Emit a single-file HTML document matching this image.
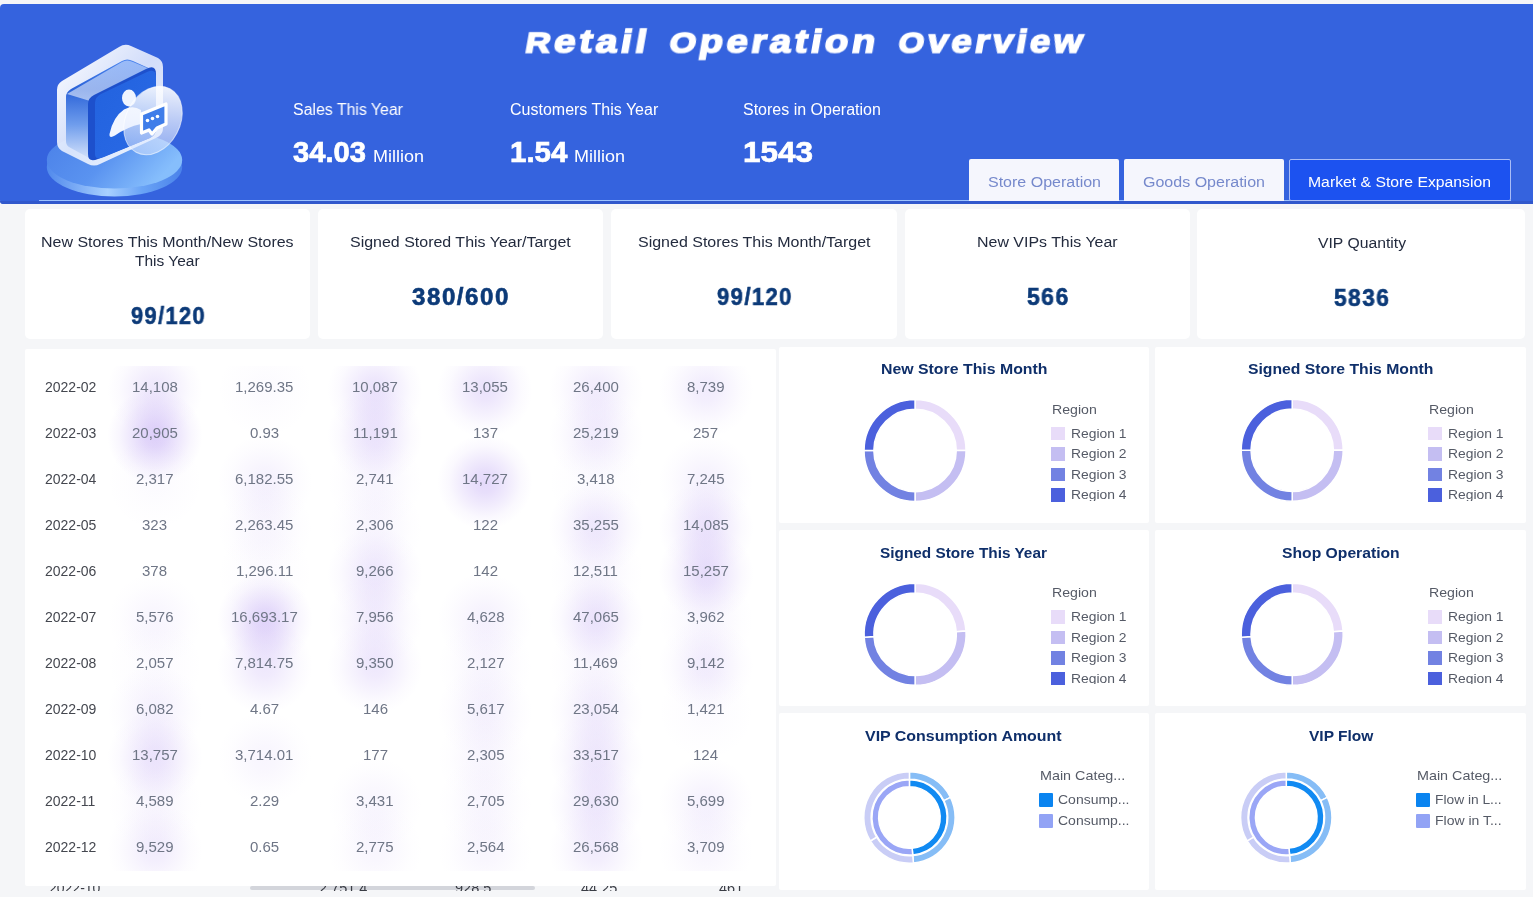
<!DOCTYPE html><html><head><meta charset="utf-8"><style>
*{margin:0;padding:0;box-sizing:border-box}
html,body{width:1533px;height:897px;overflow:hidden;background:#f5f6f8;font-family:"Liberation Sans",sans-serif}
.t{position:absolute;white-space:pre;line-height:1;transform-origin:0 0;will-change:transform}
.a{position:absolute}
.card{position:absolute;background:#fff;border-radius:4px}
</style></head><body><div class="a" style="left:0;top:4px;width:1533px;height:200px;background:#3563de;border-radius:4px 0 0 4px"></div><div class="a" style="left:0;top:201px;width:1533px;height:3px;background:#3158cc;border-radius:0 0 0 3px"></div><div class="a" style="left:39px;top:200px;width:1472px;height:1px;background:#9cc2ff"></div><div class="t" style="left:524px;top:24.67px;font-size:33px;color:#fff;font-weight:bold;letter-spacing:3px;transform-origin:0 27.93px;transform:skewX(-10deg) scaleX(1.1772);-webkit-text-stroke:1.6px #fff"><span style="font-size:29.5px">R</span>etail</div><div class="t" style="left:668px;top:24.67px;font-size:33px;color:#fff;font-weight:bold;letter-spacing:3px;transform-origin:0 27.93px;transform:skewX(-10deg) scaleX(1.1603);-webkit-text-stroke:1.6px #fff"><span style="font-size:29.5px">O</span>peration</div><div class="t" style="left:897px;top:24.67px;font-size:33px;color:#fff;font-weight:bold;letter-spacing:3px;transform-origin:0 27.93px;transform:skewX(-10deg) scaleX(1.1128);-webkit-text-stroke:1.6px #fff"><span style="font-size:29.5px">O</span>verview</div><div class="t" style="left:293.00px;top:101.76px;font-size:16px;color:#fff;font-weight:normal;font-style:normal;transform:scaleX(0.9919);">Sales This Year</div><div class="t" style="left:293.00px;top:137.95px;font-size:29px;color:#fff;font-weight:bold;font-style:normal;transform:scaleX(1.0059);-webkit-text-stroke:0.7px #fff;">34.03</div><div class="t" style="left:372.50px;top:148.11px;font-size:17px;color:#fff;font-weight:normal;font-style:normal;transform:scaleX(1.0585);">Million</div><div class="t" style="left:509.60px;top:101.76px;font-size:16px;color:#fff;font-weight:normal;font-style:normal;">Customers This Year</div><div class="t" style="left:509.60px;top:137.95px;font-size:29px;color:#fff;font-weight:bold;font-style:normal;transform:scaleX(1.0169);-webkit-text-stroke:0.7px #fff;">1.54</div><div class="t" style="left:573.50px;top:148.11px;font-size:17px;color:#fff;font-weight:normal;font-style:normal;transform:scaleX(1.0585);">Million</div><div class="t" style="left:743.00px;top:101.76px;font-size:16px;color:#fff;font-weight:normal;font-style:normal;">Stores in Operation</div><div class="t" style="left:743.00px;top:137.95px;font-size:29px;color:#fff;font-weight:bold;font-style:normal;transform:scaleX(1.0850);-webkit-text-stroke:0.7px #fff;">1543</div><div class="a" style="left:969px;top:159px;width:150px;height:42px;background:#f5f6fd;border-radius:2px 2px 0 0"></div><div class="a" style="left:1124px;top:159px;width:160px;height:42px;background:#f5f6fd;border-radius:2px 2px 0 0"></div><div class="a" style="left:1289px;top:159px;width:222px;height:42px;background:#1c52f0;border:1px solid #a9bdf7;border-radius:2px"></div><div class="t" style="left:987.50px;top:173.88px;font-size:15.5px;color:#7689cc;font-weight:normal;font-style:normal;transform:scaleX(1.0327);">Store Operation</div><div class="t" style="left:1143.00px;top:173.88px;font-size:15.5px;color:#7689cc;font-weight:normal;font-style:normal;transform:scaleX(1.0335);">Goods Operation</div><div class="t" style="left:1308.00px;top:173.88px;font-size:15.5px;color:#fff;font-weight:normal;font-style:normal;transform:scaleX(1.0163);">Market &amp; Store Expansion</div><svg class="a" style="left:0;top:0" width="220" height="205" viewBox="0 0 220 205">
<defs>
<linearGradient id="dtop" x1="0" y1="0" x2="1" y2="0.4"><stop offset="0" stop-color="#4a80e8"/><stop offset="0.55" stop-color="#5a93f0"/><stop offset="1" stop-color="#86befc"/></linearGradient>
<linearGradient id="drim" x1="0" y1="0" x2="1" y2="0"><stop offset="0" stop-color="#5089ec"/><stop offset="0.45" stop-color="#a8d0ff"/><stop offset="0.7" stop-color="#6aa4f6"/><stop offset="1" stop-color="#4a82ea"/></linearGradient>
<linearGradient id="glass" x1="0" y1="0" x2="1" y2="1"><stop offset="0" stop-color="#ffffff" stop-opacity="1"/><stop offset="0.5" stop-color="#eef3ff" stop-opacity="0.85"/><stop offset="1" stop-color="#ffffff" stop-opacity="0.9"/></linearGradient>
<linearGradient id="cav" x1="0" y1="0" x2="0" y2="1"><stop offset="0" stop-color="#4a84ee"/><stop offset="0.3" stop-color="#2a62d8"/><stop offset="0.65" stop-color="#6e9cec"/><stop offset="1" stop-color="#d4e2fb"/></linearGradient>
<linearGradient id="topf" x1="0" y1="1" x2="1" y2="0"><stop offset="0" stop-color="#ffffff" stop-opacity="0.55"/><stop offset="1" stop-color="#c9dcff" stop-opacity="0.6"/></linearGradient>
<linearGradient id="face" x1="0" y1="0" x2="1" y2="1"><stop offset="0" stop-color="#2262de"/><stop offset="1" stop-color="#2a6ae6"/></linearGradient>
<linearGradient id="circ" x1="0.2" y1="0" x2="0.5" y2="1"><stop offset="0" stop-color="#ffffff" stop-opacity="0.95"/><stop offset="0.55" stop-color="#eef3ff" stop-opacity="0.7"/><stop offset="1" stop-color="#d6e4ff" stop-opacity="0.55"/></linearGradient>
</defs>
<ellipse cx="114.5" cy="167" rx="67.7" ry="29.5" fill="url(#drim)"/>
<ellipse cx="114.5" cy="160" rx="67.7" ry="28.5" fill="url(#dtop)"/>
<path d="M57,90 Q57,84 62,81 L119,47 Q125,43 131,46 L158,58 Q163,61 163,67 L163,128 Q163,134 158,137 L100,164 Q94,167 88,164 L62,151 Q57,148 57,142 Z" fill="url(#glass)"/>
<path d="M66,97 Q66,92 71,89 L122,61 Q127,58 133,61 L155,71 L155,132 L97,158 Q93,160 89,158 L69,147 Q66,145 66,141 Z" fill="url(#cav)"/>
<path d="M67,94 L122,62 Q127,59 133,62 L152,70 L90,101 Z" fill="url(#topf)"/>
<path d="M88,104 Q88,98 94,95 L146,69 Q156,64 156,74 L156,129 Q156,135 150,138 L98,159 Q88,163 88,154 Z" fill="#1d50cc"/>
<path d="M95,103 Q95,97 101,94 L147,72 Q156,68 156,77 L156,129 Q156,135 150,138 L104,157 Q95,161 95,154 Z" fill="url(#face)"/>
<ellipse cx="129" cy="98" rx="7" ry="8.5" fill="#eef4ff"/>
<path d="M109.5,134 Q113,117 124,109.5 Q133,105 141,110 L141,124 Q127,127 115,135.5 Q109,139 109.5,134 Z" fill="#f2f6ff"/>
<ellipse cx="153" cy="120.5" rx="27" ry="36" transform="rotate(28 153 120.5)" fill="url(#circ)" stroke="#ffffff" stroke-opacity="0.6" stroke-width="1"/>
<path d="M141.5,114 L166,104 L166,124 L157,128 L152,134 L149,130 L141.5,133 Z" fill="#3f7de9" stroke="#ffffff" stroke-width="3.2" stroke-linejoin="round"/>
<circle cx="147.5" cy="120.5" r="1.8" fill="#ffffff"/><circle cx="152.5" cy="118.5" r="1.8" fill="#ffffff"/><circle cx="157.5" cy="116.5" r="1.8" fill="#ffffff"/>
</svg><div class="card" style="left:25px;top:209px;width:285px;height:130px;border-radius:5px"></div><div class="card" style="left:318px;top:209px;width:285.4px;height:130px;border-radius:5px"></div><div class="card" style="left:611px;top:209px;width:286.4px;height:130px;border-radius:5px"></div><div class="card" style="left:904.7px;top:209px;width:285.3px;height:130px;border-radius:5px"></div><div class="card" style="left:1197.4px;top:209px;width:328px;height:130px;border-radius:5px"></div><div class="t" style="left:41.30px;top:234.28px;font-size:15.5px;color:#232b3e;font-weight:normal;font-style:normal;transform:scaleX(1.0301);">New Stores This Month/New Stores</div><div class="t" style="left:135.29px;top:253.18px;font-size:15.5px;color:#232b3e;font-weight:normal;font-style:normal;">This Year</div><div class="t" style="left:130.70px;top:304.91px;font-size:23.5px;color:#0c3a78;font-weight:bold;font-style:normal;transform:scaleX(0.9273);letter-spacing:1.5px;-webkit-text-stroke:0.6px #0c3a78;">99/120</div><div class="t" style="left:350.20px;top:234.38px;font-size:15.5px;color:#232b3e;font-weight:normal;font-style:normal;transform:scaleX(1.0304);">Signed Stored This Year/Target</div><div class="t" style="left:412.42px;top:286.41px;font-size:23.5px;color:#0c3a78;font-weight:bold;font-style:normal;transform:scaleX(1.0257);letter-spacing:1.5px;-webkit-text-stroke:0.6px #0c3a78;">380/600</div><div class="t" style="left:637.75px;top:234.38px;font-size:15.5px;color:#232b3e;font-weight:normal;font-style:normal;transform:scaleX(1.0313);">Signed Stores This Month/Target</div><div class="t" style="left:717.30px;top:286.11px;font-size:23.5px;color:#0c3a78;font-weight:bold;font-style:normal;transform:scaleX(0.9372);letter-spacing:1.5px;-webkit-text-stroke:0.6px #0c3a78;">99/120</div><div class="t" style="left:977.10px;top:234.38px;font-size:15.5px;color:#232b3e;font-weight:normal;font-style:normal;transform:scaleX(1.0285);">New VIPs This Year</div><div class="t" style="left:1026.73px;top:286.11px;font-size:23.5px;color:#0c3a78;font-weight:bold;font-style:normal;transform:scaleX(0.9746);letter-spacing:1.5px;-webkit-text-stroke:0.6px #0c3a78;">566</div><div class="t" style="left:1317.50px;top:234.58px;font-size:15.5px;color:#232b3e;font-weight:normal;font-style:normal;transform:scaleX(1.0146);">VIP Quantity</div><div class="t" style="left:1334.27px;top:286.91px;font-size:23.5px;color:#0c3a78;font-weight:bold;font-style:normal;transform:scaleX(0.9660);letter-spacing:1.5px;-webkit-text-stroke:0.6px #0c3a78;">5836</div><div class="card" style="left:25px;top:349px;width:751px;height:537px;border-radius:2px"></div><div class="card" style="left:779px;top:347px;width:370px;height:176px;border-radius:2px"></div><div class="card" style="left:779px;top:530px;width:370px;height:176px;border-radius:2px"></div><div class="card" style="left:779px;top:713px;width:370px;height:177px;border-radius:2px"></div><div class="card" style="left:1155px;top:347px;width:371px;height:176px;border-radius:2px"></div><div class="card" style="left:1155px;top:530px;width:371px;height:176px;border-radius:2px"></div><div class="card" style="left:1155px;top:713px;width:371px;height:177px;border-radius:2px"></div><div class="a" style="left:25px;top:886px;width:751px;height:5px;overflow:hidden"><div class="a" style="left:225px;top:0px;width:285px;height:4px;background:#d3d5db;border-radius:2px"></div><div class="t" style="left:24.00px;top:-4.65px;font-size:14px;color:#3a3d45;font-weight:normal;font-style:normal;">2022-10</div><div class="t" style="left:294.31px;top:-5.07px;font-size:14.5px;color:#3a3d45;font-weight:normal;font-style:normal;">2,751.4</div><div class="t" style="left:429.86px;top:-5.07px;font-size:14.5px;color:#3a3d45;font-weight:normal;font-style:normal;">928.5</div><div class="t" style="left:555.86px;top:-5.07px;font-size:14.5px;color:#3a3d45;font-weight:normal;font-style:normal;">44.25</div><div class="t" style="left:693.90px;top:-5.07px;font-size:14.5px;color:#3a3d45;font-weight:normal;font-style:normal;">461</div></div><div class="a" style="left:25px;top:366px;width:751px;height:505px;overflow:hidden"><div class="a" style="left:79.6px;top:-26px;width:100px;height:100px;background:radial-gradient(closest-side,rgba(155,115,238,0.170) 0%,rgba(155,115,238,0.145) 22%,rgba(155,115,238,0.085) 48%,rgba(155,115,238,0.031) 72%,rgba(155,115,238,0) 95%)"></div><div class="a" style="left:79.6px;top:20px;width:100px;height:100px;background:radial-gradient(closest-side,rgba(155,115,238,0.340) 0%,rgba(155,115,238,0.289) 22%,rgba(155,115,238,0.170) 48%,rgba(155,115,238,0.061) 72%,rgba(155,115,238,0) 95%)"></div><div class="a" style="left:79.6px;top:66px;width:100px;height:100px;background:radial-gradient(closest-side,rgba(155,115,238,0.034) 0%,rgba(155,115,238,0.029) 22%,rgba(155,115,238,0.017) 48%,rgba(155,115,238,0.006) 72%,rgba(155,115,238,0) 95%)"></div><div class="a" style="left:79.6px;top:204px;width:100px;height:100px;background:radial-gradient(closest-side,rgba(155,115,238,0.068) 0%,rgba(155,115,238,0.058) 22%,rgba(155,115,238,0.034) 48%,rgba(155,115,238,0.012) 72%,rgba(155,115,238,0) 95%)"></div><div class="a" style="left:79.6px;top:250px;width:100px;height:100px;background:radial-gradient(closest-side,rgba(155,115,238,0.034) 0%,rgba(155,115,238,0.029) 22%,rgba(155,115,238,0.017) 48%,rgba(155,115,238,0.006) 72%,rgba(155,115,238,0) 95%)"></div><div class="a" style="left:79.6px;top:296px;width:100px;height:100px;background:radial-gradient(closest-side,rgba(155,115,238,0.102) 0%,rgba(155,115,238,0.087) 22%,rgba(155,115,238,0.051) 48%,rgba(155,115,238,0.018) 72%,rgba(155,115,238,0) 95%)"></div><div class="a" style="left:79.6px;top:342px;width:100px;height:100px;background:radial-gradient(closest-side,rgba(155,115,238,0.204) 0%,rgba(155,115,238,0.173) 22%,rgba(155,115,238,0.102) 48%,rgba(155,115,238,0.037) 72%,rgba(155,115,238,0) 95%)"></div><div class="a" style="left:79.6px;top:388px;width:100px;height:100px;background:radial-gradient(closest-side,rgba(155,115,238,0.068) 0%,rgba(155,115,238,0.058) 22%,rgba(155,115,238,0.034) 48%,rgba(155,115,238,0.012) 72%,rgba(155,115,238,0) 95%)"></div><div class="a" style="left:79.6px;top:434px;width:100px;height:100px;background:radial-gradient(closest-side,rgba(155,115,238,0.136) 0%,rgba(155,115,238,0.116) 22%,rgba(155,115,238,0.068) 48%,rgba(155,115,238,0.024) 72%,rgba(155,115,238,0) 95%)"></div><div class="a" style="left:189.6px;top:-26px;width:100px;height:100px;background:radial-gradient(closest-side,rgba(155,115,238,0.034) 0%,rgba(155,115,238,0.029) 22%,rgba(155,115,238,0.017) 48%,rgba(155,115,238,0.006) 72%,rgba(155,115,238,0) 95%)"></div><div class="a" style="left:189.6px;top:66px;width:100px;height:100px;background:radial-gradient(closest-side,rgba(155,115,238,0.102) 0%,rgba(155,115,238,0.087) 22%,rgba(155,115,238,0.051) 48%,rgba(155,115,238,0.018) 72%,rgba(155,115,238,0) 95%)"></div><div class="a" style="left:189.6px;top:112px;width:100px;height:100px;background:radial-gradient(closest-side,rgba(155,115,238,0.068) 0%,rgba(155,115,238,0.058) 22%,rgba(155,115,238,0.034) 48%,rgba(155,115,238,0.012) 72%,rgba(155,115,238,0) 95%)"></div><div class="a" style="left:189.6px;top:158px;width:100px;height:100px;background:radial-gradient(closest-side,rgba(155,115,238,0.034) 0%,rgba(155,115,238,0.029) 22%,rgba(155,115,238,0.017) 48%,rgba(155,115,238,0.006) 72%,rgba(155,115,238,0) 95%)"></div><div class="a" style="left:189.6px;top:204px;width:100px;height:100px;background:radial-gradient(closest-side,rgba(155,115,238,0.306) 0%,rgba(155,115,238,0.260) 22%,rgba(155,115,238,0.153) 48%,rgba(155,115,238,0.055) 72%,rgba(155,115,238,0) 95%)"></div><div class="a" style="left:189.6px;top:250px;width:100px;height:100px;background:radial-gradient(closest-side,rgba(155,115,238,0.170) 0%,rgba(155,115,238,0.145) 22%,rgba(155,115,238,0.085) 48%,rgba(155,115,238,0.031) 72%,rgba(155,115,238,0) 95%)"></div><div class="a" style="left:189.6px;top:342px;width:100px;height:100px;background:radial-gradient(closest-side,rgba(155,115,238,0.068) 0%,rgba(155,115,238,0.058) 22%,rgba(155,115,238,0.034) 48%,rgba(155,115,238,0.012) 72%,rgba(155,115,238,0) 95%)"></div><div class="a" style="left:300.1px;top:-26px;width:100px;height:100px;background:radial-gradient(closest-side,rgba(155,115,238,0.204) 0%,rgba(155,115,238,0.173) 22%,rgba(155,115,238,0.102) 48%,rgba(155,115,238,0.037) 72%,rgba(155,115,238,0) 95%)"></div><div class="a" style="left:300.1px;top:20px;width:100px;height:100px;background:radial-gradient(closest-side,rgba(155,115,238,0.204) 0%,rgba(155,115,238,0.173) 22%,rgba(155,115,238,0.102) 48%,rgba(155,115,238,0.037) 72%,rgba(155,115,238,0) 95%)"></div><div class="a" style="left:300.1px;top:66px;width:100px;height:100px;background:radial-gradient(closest-side,rgba(155,115,238,0.068) 0%,rgba(155,115,238,0.058) 22%,rgba(155,115,238,0.034) 48%,rgba(155,115,238,0.012) 72%,rgba(155,115,238,0) 95%)"></div><div class="a" style="left:300.1px;top:112px;width:100px;height:100px;background:radial-gradient(closest-side,rgba(155,115,238,0.068) 0%,rgba(155,115,238,0.058) 22%,rgba(155,115,238,0.034) 48%,rgba(155,115,238,0.012) 72%,rgba(155,115,238,0) 95%)"></div><div class="a" style="left:300.1px;top:158px;width:100px;height:100px;background:radial-gradient(closest-side,rgba(155,115,238,0.170) 0%,rgba(155,115,238,0.145) 22%,rgba(155,115,238,0.085) 48%,rgba(155,115,238,0.031) 72%,rgba(155,115,238,0) 95%)"></div><div class="a" style="left:300.1px;top:204px;width:100px;height:100px;background:radial-gradient(closest-side,rgba(155,115,238,0.136) 0%,rgba(155,115,238,0.116) 22%,rgba(155,115,238,0.068) 48%,rgba(155,115,238,0.024) 72%,rgba(155,115,238,0) 95%)"></div><div class="a" style="left:300.1px;top:250px;width:100px;height:100px;background:radial-gradient(closest-side,rgba(155,115,238,0.170) 0%,rgba(155,115,238,0.145) 22%,rgba(155,115,238,0.085) 48%,rgba(155,115,238,0.031) 72%,rgba(155,115,238,0) 95%)"></div><div class="a" style="left:300.1px;top:388px;width:100px;height:100px;background:radial-gradient(closest-side,rgba(155,115,238,0.068) 0%,rgba(155,115,238,0.058) 22%,rgba(155,115,238,0.034) 48%,rgba(155,115,238,0.012) 72%,rgba(155,115,238,0) 95%)"></div><div class="a" style="left:300.1px;top:434px;width:100px;height:100px;background:radial-gradient(closest-side,rgba(155,115,238,0.068) 0%,rgba(155,115,238,0.058) 22%,rgba(155,115,238,0.034) 48%,rgba(155,115,238,0.012) 72%,rgba(155,115,238,0) 95%)"></div><div class="a" style="left:410.4px;top:-26px;width:100px;height:100px;background:radial-gradient(closest-side,rgba(155,115,238,0.204) 0%,rgba(155,115,238,0.173) 22%,rgba(155,115,238,0.102) 48%,rgba(155,115,238,0.037) 72%,rgba(155,115,238,0) 95%)"></div><div class="a" style="left:410.4px;top:66px;width:100px;height:100px;background:radial-gradient(closest-side,rgba(155,115,238,0.272) 0%,rgba(155,115,238,0.231) 22%,rgba(155,115,238,0.136) 48%,rgba(155,115,238,0.049) 72%,rgba(155,115,238,0) 95%)"></div><div class="a" style="left:410.4px;top:204px;width:100px;height:100px;background:radial-gradient(closest-side,rgba(155,115,238,0.102) 0%,rgba(155,115,238,0.087) 22%,rgba(155,115,238,0.051) 48%,rgba(155,115,238,0.018) 72%,rgba(155,115,238,0) 95%)"></div><div class="a" style="left:410.4px;top:250px;width:100px;height:100px;background:radial-gradient(closest-side,rgba(155,115,238,0.068) 0%,rgba(155,115,238,0.058) 22%,rgba(155,115,238,0.034) 48%,rgba(155,115,238,0.012) 72%,rgba(155,115,238,0) 95%)"></div><div class="a" style="left:410.4px;top:296px;width:100px;height:100px;background:radial-gradient(closest-side,rgba(155,115,238,0.102) 0%,rgba(155,115,238,0.087) 22%,rgba(155,115,238,0.051) 48%,rgba(155,115,238,0.018) 72%,rgba(155,115,238,0) 95%)"></div><div class="a" style="left:410.4px;top:342px;width:100px;height:100px;background:radial-gradient(closest-side,rgba(155,115,238,0.068) 0%,rgba(155,115,238,0.058) 22%,rgba(155,115,238,0.034) 48%,rgba(155,115,238,0.012) 72%,rgba(155,115,238,0) 95%)"></div><div class="a" style="left:410.4px;top:388px;width:100px;height:100px;background:radial-gradient(closest-side,rgba(155,115,238,0.068) 0%,rgba(155,115,238,0.058) 22%,rgba(155,115,238,0.034) 48%,rgba(155,115,238,0.012) 72%,rgba(155,115,238,0) 95%)"></div><div class="a" style="left:410.4px;top:434px;width:100px;height:100px;background:radial-gradient(closest-side,rgba(155,115,238,0.068) 0%,rgba(155,115,238,0.058) 22%,rgba(155,115,238,0.034) 48%,rgba(155,115,238,0.012) 72%,rgba(155,115,238,0) 95%)"></div><div class="a" style="left:520.6px;top:-26px;width:100px;height:100px;background:radial-gradient(closest-side,rgba(155,115,238,0.136) 0%,rgba(155,115,238,0.116) 22%,rgba(155,115,238,0.068) 48%,rgba(155,115,238,0.024) 72%,rgba(155,115,238,0) 95%)"></div><div class="a" style="left:520.6px;top:20px;width:100px;height:100px;background:radial-gradient(closest-side,rgba(155,115,238,0.136) 0%,rgba(155,115,238,0.116) 22%,rgba(155,115,238,0.068) 48%,rgba(155,115,238,0.024) 72%,rgba(155,115,238,0) 95%)"></div><div class="a" style="left:520.6px;top:66px;width:100px;height:100px;background:radial-gradient(closest-side,rgba(155,115,238,0.034) 0%,rgba(155,115,238,0.029) 22%,rgba(155,115,238,0.017) 48%,rgba(155,115,238,0.006) 72%,rgba(155,115,238,0) 95%)"></div><div class="a" style="left:520.6px;top:112px;width:100px;height:100px;background:radial-gradient(closest-side,rgba(155,115,238,0.170) 0%,rgba(155,115,238,0.145) 22%,rgba(155,115,238,0.085) 48%,rgba(155,115,238,0.031) 72%,rgba(155,115,238,0) 95%)"></div><div class="a" style="left:520.6px;top:158px;width:100px;height:100px;background:radial-gradient(closest-side,rgba(155,115,238,0.068) 0%,rgba(155,115,238,0.058) 22%,rgba(155,115,238,0.034) 48%,rgba(155,115,238,0.012) 72%,rgba(155,115,238,0) 95%)"></div><div class="a" style="left:520.6px;top:204px;width:100px;height:100px;background:radial-gradient(closest-side,rgba(155,115,238,0.204) 0%,rgba(155,115,238,0.173) 22%,rgba(155,115,238,0.102) 48%,rgba(155,115,238,0.037) 72%,rgba(155,115,238,0) 95%)"></div><div class="a" style="left:520.6px;top:250px;width:100px;height:100px;background:radial-gradient(closest-side,rgba(155,115,238,0.068) 0%,rgba(155,115,238,0.058) 22%,rgba(155,115,238,0.034) 48%,rgba(155,115,238,0.012) 72%,rgba(155,115,238,0) 95%)"></div><div class="a" style="left:520.6px;top:296px;width:100px;height:100px;background:radial-gradient(closest-side,rgba(155,115,238,0.136) 0%,rgba(155,115,238,0.116) 22%,rgba(155,115,238,0.068) 48%,rgba(155,115,238,0.024) 72%,rgba(155,115,238,0) 95%)"></div><div class="a" style="left:520.6px;top:342px;width:100px;height:100px;background:radial-gradient(closest-side,rgba(155,115,238,0.170) 0%,rgba(155,115,238,0.145) 22%,rgba(155,115,238,0.085) 48%,rgba(155,115,238,0.031) 72%,rgba(155,115,238,0) 95%)"></div><div class="a" style="left:520.6px;top:388px;width:100px;height:100px;background:radial-gradient(closest-side,rgba(155,115,238,0.170) 0%,rgba(155,115,238,0.145) 22%,rgba(155,115,238,0.085) 48%,rgba(155,115,238,0.031) 72%,rgba(155,115,238,0) 95%)"></div><div class="a" style="left:520.6px;top:434px;width:100px;height:100px;background:radial-gradient(closest-side,rgba(155,115,238,0.136) 0%,rgba(155,115,238,0.116) 22%,rgba(155,115,238,0.068) 48%,rgba(155,115,238,0.024) 72%,rgba(155,115,238,0) 95%)"></div><div class="a" style="left:630.6px;top:-26px;width:100px;height:100px;background:radial-gradient(closest-side,rgba(155,115,238,0.136) 0%,rgba(155,115,238,0.116) 22%,rgba(155,115,238,0.068) 48%,rgba(155,115,238,0.024) 72%,rgba(155,115,238,0) 95%)"></div><div class="a" style="left:630.6px;top:66px;width:100px;height:100px;background:radial-gradient(closest-side,rgba(155,115,238,0.102) 0%,rgba(155,115,238,0.087) 22%,rgba(155,115,238,0.051) 48%,rgba(155,115,238,0.018) 72%,rgba(155,115,238,0) 95%)"></div><div class="a" style="left:630.6px;top:112px;width:100px;height:100px;background:radial-gradient(closest-side,rgba(155,115,238,0.204) 0%,rgba(155,115,238,0.173) 22%,rgba(155,115,238,0.102) 48%,rgba(155,115,238,0.037) 72%,rgba(155,115,238,0) 95%)"></div><div class="a" style="left:630.6px;top:158px;width:100px;height:100px;background:radial-gradient(closest-side,rgba(155,115,238,0.238) 0%,rgba(155,115,238,0.202) 22%,rgba(155,115,238,0.119) 48%,rgba(155,115,238,0.043) 72%,rgba(155,115,238,0) 95%)"></div><div class="a" style="left:630.6px;top:204px;width:100px;height:100px;background:radial-gradient(closest-side,rgba(155,115,238,0.068) 0%,rgba(155,115,238,0.058) 22%,rgba(155,115,238,0.034) 48%,rgba(155,115,238,0.012) 72%,rgba(155,115,238,0) 95%)"></div><div class="a" style="left:630.6px;top:250px;width:100px;height:100px;background:radial-gradient(closest-side,rgba(155,115,238,0.136) 0%,rgba(155,115,238,0.116) 22%,rgba(155,115,238,0.068) 48%,rgba(155,115,238,0.024) 72%,rgba(155,115,238,0) 95%)"></div><div class="a" style="left:630.6px;top:296px;width:100px;height:100px;background:radial-gradient(closest-side,rgba(155,115,238,0.034) 0%,rgba(155,115,238,0.029) 22%,rgba(155,115,238,0.017) 48%,rgba(155,115,238,0.006) 72%,rgba(155,115,238,0) 95%)"></div><div class="a" style="left:630.6px;top:388px;width:100px;height:100px;background:radial-gradient(closest-side,rgba(155,115,238,0.102) 0%,rgba(155,115,238,0.087) 22%,rgba(155,115,238,0.051) 48%,rgba(155,115,238,0.018) 72%,rgba(155,115,238,0) 95%)"></div><div class="a" style="left:630.6px;top:434px;width:100px;height:100px;background:radial-gradient(closest-side,rgba(155,115,238,0.068) 0%,rgba(155,115,238,0.058) 22%,rgba(155,115,238,0.034) 48%,rgba(155,115,238,0.012) 72%,rgba(155,115,238,0) 95%)"></div></div><div class="t" style="left:45.10px;top:379.55px;font-size:14px;color:#44474f;font-weight:normal;font-style:normal;">2022-02</div><div class="t" style="left:131.66px;top:378.70px;font-size:15px;color:#6f7686;font-weight:normal;font-style:normal;">14,108</div><div class="t" style="left:235.41px;top:378.70px;font-size:15px;color:#6f7686;font-weight:normal;font-style:normal;">1,269.35</div><div class="t" style="left:352.16px;top:378.70px;font-size:15px;color:#6f7686;font-weight:normal;font-style:normal;">10,087</div><div class="t" style="left:462.46px;top:378.70px;font-size:15px;color:#6f7686;font-weight:normal;font-style:normal;">13,055</div><div class="t" style="left:572.66px;top:378.70px;font-size:15px;color:#6f7686;font-weight:normal;font-style:normal;">26,400</div><div class="t" style="left:686.83px;top:378.70px;font-size:15px;color:#6f7686;font-weight:normal;font-style:normal;">8,739</div><div class="t" style="left:45.10px;top:425.55px;font-size:14px;color:#44474f;font-weight:normal;font-style:normal;">2022-03</div><div class="t" style="left:131.66px;top:424.70px;font-size:15px;color:#6f7686;font-weight:normal;font-style:normal;">20,905</div><div class="t" style="left:250.00px;top:424.70px;font-size:15px;color:#6f7686;font-weight:normal;font-style:normal;">0.93</div><div class="t" style="left:352.72px;top:424.70px;font-size:15px;color:#6f7686;font-weight:normal;font-style:normal;">11,191</div><div class="t" style="left:472.89px;top:424.70px;font-size:15px;color:#6f7686;font-weight:normal;font-style:normal;">137</div><div class="t" style="left:572.66px;top:424.70px;font-size:15px;color:#6f7686;font-weight:normal;font-style:normal;">25,219</div><div class="t" style="left:693.09px;top:424.70px;font-size:15px;color:#6f7686;font-weight:normal;font-style:normal;">257</div><div class="t" style="left:45.10px;top:471.55px;font-size:14px;color:#44474f;font-weight:normal;font-style:normal;">2022-04</div><div class="t" style="left:135.83px;top:470.70px;font-size:15px;color:#6f7686;font-weight:normal;font-style:normal;">2,317</div><div class="t" style="left:235.41px;top:470.70px;font-size:15px;color:#6f7686;font-weight:normal;font-style:normal;">6,182.55</div><div class="t" style="left:356.33px;top:470.70px;font-size:15px;color:#6f7686;font-weight:normal;font-style:normal;">2,741</div><div class="t" style="left:462.46px;top:470.70px;font-size:15px;color:#6f7686;font-weight:normal;font-style:normal;">14,727</div><div class="t" style="left:576.83px;top:470.70px;font-size:15px;color:#6f7686;font-weight:normal;font-style:normal;">3,418</div><div class="t" style="left:686.83px;top:470.70px;font-size:15px;color:#6f7686;font-weight:normal;font-style:normal;">7,245</div><div class="t" style="left:45.10px;top:517.55px;font-size:14px;color:#44474f;font-weight:normal;font-style:normal;">2022-05</div><div class="t" style="left:142.09px;top:516.70px;font-size:15px;color:#6f7686;font-weight:normal;font-style:normal;">323</div><div class="t" style="left:235.41px;top:516.70px;font-size:15px;color:#6f7686;font-weight:normal;font-style:normal;">2,263.45</div><div class="t" style="left:356.33px;top:516.70px;font-size:15px;color:#6f7686;font-weight:normal;font-style:normal;">2,306</div><div class="t" style="left:472.89px;top:516.70px;font-size:15px;color:#6f7686;font-weight:normal;font-style:normal;">122</div><div class="t" style="left:572.66px;top:516.70px;font-size:15px;color:#6f7686;font-weight:normal;font-style:normal;">35,255</div><div class="t" style="left:682.66px;top:516.70px;font-size:15px;color:#6f7686;font-weight:normal;font-style:normal;">14,085</div><div class="t" style="left:45.10px;top:563.55px;font-size:14px;color:#44474f;font-weight:normal;font-style:normal;">2022-06</div><div class="t" style="left:142.09px;top:562.70px;font-size:15px;color:#6f7686;font-weight:normal;font-style:normal;">378</div><div class="t" style="left:235.96px;top:562.70px;font-size:15px;color:#6f7686;font-weight:normal;font-style:normal;">1,296.11</div><div class="t" style="left:356.33px;top:562.70px;font-size:15px;color:#6f7686;font-weight:normal;font-style:normal;">9,266</div><div class="t" style="left:472.89px;top:562.70px;font-size:15px;color:#6f7686;font-weight:normal;font-style:normal;">142</div><div class="t" style="left:573.22px;top:562.70px;font-size:15px;color:#6f7686;font-weight:normal;font-style:normal;">12,511</div><div class="t" style="left:682.66px;top:562.70px;font-size:15px;color:#6f7686;font-weight:normal;font-style:normal;">15,257</div><div class="t" style="left:45.10px;top:609.55px;font-size:14px;color:#44474f;font-weight:normal;font-style:normal;">2022-07</div><div class="t" style="left:135.83px;top:608.70px;font-size:15px;color:#6f7686;font-weight:normal;font-style:normal;">5,576</div><div class="t" style="left:231.23px;top:608.70px;font-size:15px;color:#6f7686;font-weight:normal;font-style:normal;">16,693.17</div><div class="t" style="left:356.33px;top:608.70px;font-size:15px;color:#6f7686;font-weight:normal;font-style:normal;">7,956</div><div class="t" style="left:466.63px;top:608.70px;font-size:15px;color:#6f7686;font-weight:normal;font-style:normal;">4,628</div><div class="t" style="left:572.66px;top:608.70px;font-size:15px;color:#6f7686;font-weight:normal;font-style:normal;">47,065</div><div class="t" style="left:686.83px;top:608.70px;font-size:15px;color:#6f7686;font-weight:normal;font-style:normal;">3,962</div><div class="t" style="left:45.10px;top:655.55px;font-size:14px;color:#44474f;font-weight:normal;font-style:normal;">2022-08</div><div class="t" style="left:135.83px;top:654.70px;font-size:15px;color:#6f7686;font-weight:normal;font-style:normal;">2,057</div><div class="t" style="left:235.41px;top:654.70px;font-size:15px;color:#6f7686;font-weight:normal;font-style:normal;">7,814.75</div><div class="t" style="left:356.33px;top:654.70px;font-size:15px;color:#6f7686;font-weight:normal;font-style:normal;">9,350</div><div class="t" style="left:466.63px;top:654.70px;font-size:15px;color:#6f7686;font-weight:normal;font-style:normal;">2,127</div><div class="t" style="left:573.22px;top:654.70px;font-size:15px;color:#6f7686;font-weight:normal;font-style:normal;">11,469</div><div class="t" style="left:686.83px;top:654.70px;font-size:15px;color:#6f7686;font-weight:normal;font-style:normal;">9,142</div><div class="t" style="left:45.10px;top:701.55px;font-size:14px;color:#44474f;font-weight:normal;font-style:normal;">2022-09</div><div class="t" style="left:135.83px;top:700.70px;font-size:15px;color:#6f7686;font-weight:normal;font-style:normal;">6,082</div><div class="t" style="left:250.00px;top:700.70px;font-size:15px;color:#6f7686;font-weight:normal;font-style:normal;">4.67</div><div class="t" style="left:362.59px;top:700.70px;font-size:15px;color:#6f7686;font-weight:normal;font-style:normal;">146</div><div class="t" style="left:466.63px;top:700.70px;font-size:15px;color:#6f7686;font-weight:normal;font-style:normal;">5,617</div><div class="t" style="left:572.66px;top:700.70px;font-size:15px;color:#6f7686;font-weight:normal;font-style:normal;">23,054</div><div class="t" style="left:686.83px;top:700.70px;font-size:15px;color:#6f7686;font-weight:normal;font-style:normal;">1,421</div><div class="t" style="left:45.10px;top:747.55px;font-size:14px;color:#44474f;font-weight:normal;font-style:normal;">2022-10</div><div class="t" style="left:131.66px;top:746.70px;font-size:15px;color:#6f7686;font-weight:normal;font-style:normal;">13,757</div><div class="t" style="left:235.41px;top:746.70px;font-size:15px;color:#6f7686;font-weight:normal;font-style:normal;">3,714.01</div><div class="t" style="left:362.59px;top:746.70px;font-size:15px;color:#6f7686;font-weight:normal;font-style:normal;">177</div><div class="t" style="left:466.63px;top:746.70px;font-size:15px;color:#6f7686;font-weight:normal;font-style:normal;">2,305</div><div class="t" style="left:572.66px;top:746.70px;font-size:15px;color:#6f7686;font-weight:normal;font-style:normal;">33,517</div><div class="t" style="left:693.09px;top:746.70px;font-size:15px;color:#6f7686;font-weight:normal;font-style:normal;">124</div><div class="t" style="left:45.10px;top:793.55px;font-size:14px;color:#44474f;font-weight:normal;font-style:normal;">2022-11</div><div class="t" style="left:135.83px;top:792.70px;font-size:15px;color:#6f7686;font-weight:normal;font-style:normal;">4,589</div><div class="t" style="left:250.00px;top:792.70px;font-size:15px;color:#6f7686;font-weight:normal;font-style:normal;">2.29</div><div class="t" style="left:356.33px;top:792.70px;font-size:15px;color:#6f7686;font-weight:normal;font-style:normal;">3,431</div><div class="t" style="left:466.63px;top:792.70px;font-size:15px;color:#6f7686;font-weight:normal;font-style:normal;">2,705</div><div class="t" style="left:572.66px;top:792.70px;font-size:15px;color:#6f7686;font-weight:normal;font-style:normal;">29,630</div><div class="t" style="left:686.83px;top:792.70px;font-size:15px;color:#6f7686;font-weight:normal;font-style:normal;">5,699</div><div class="t" style="left:45.10px;top:839.55px;font-size:14px;color:#44474f;font-weight:normal;font-style:normal;">2022-12</div><div class="t" style="left:135.83px;top:838.70px;font-size:15px;color:#6f7686;font-weight:normal;font-style:normal;">9,529</div><div class="t" style="left:250.00px;top:838.70px;font-size:15px;color:#6f7686;font-weight:normal;font-style:normal;">0.65</div><div class="t" style="left:356.33px;top:838.70px;font-size:15px;color:#6f7686;font-weight:normal;font-style:normal;">2,775</div><div class="t" style="left:466.63px;top:838.70px;font-size:15px;color:#6f7686;font-weight:normal;font-style:normal;">2,564</div><div class="t" style="left:572.66px;top:838.70px;font-size:15px;color:#6f7686;font-weight:normal;font-style:normal;">26,568</div><div class="t" style="left:686.83px;top:838.70px;font-size:15px;color:#6f7686;font-weight:normal;font-style:normal;">3,709</div><svg class="a" style="left:0;top:0" width="1533" height="897" viewBox="0 0 1533 897"><path d="M915.05,399.45 A51,51 0 0 1 966.05,450.45 L956.25,450.45 A41.2,41.2 0 0 0 915.05,409.25 Z" fill="#e8dcf9" stroke="#fff" stroke-width="1.5" stroke-linejoin="round"/><path d="M966.05,450.45 A51,51 0 0 1 915.05,501.45 L915.05,491.65 A41.2,41.2 0 0 0 956.25,450.45 Z" fill="#c4bef2" stroke="#fff" stroke-width="1.5" stroke-linejoin="round"/><path d="M915.05,501.45 A51,51 0 0 1 864.05,450.45 L873.85,450.45 A41.2,41.2 0 0 0 915.05,491.65 Z" fill="#7282e2" stroke="#fff" stroke-width="1.5" stroke-linejoin="round"/><path d="M864.05,450.45 A51,51 0 0 1 915.05,399.45 L915.05,409.25 A41.2,41.2 0 0 0 873.85,450.45 Z" fill="#4b60dd" stroke="#fff" stroke-width="1.5" stroke-linejoin="round"/><path d="M1292.20,399.30 A51,51 0 0 1 1343.20,450.30 L1333.40,450.30 A41.2,41.2 0 0 0 1292.20,409.10 Z" fill="#e8dcf9" stroke="#fff" stroke-width="1.5" stroke-linejoin="round"/><path d="M1343.20,450.30 A51,51 0 0 1 1292.20,501.30 L1292.20,491.50 A41.2,41.2 0 0 0 1333.40,450.30 Z" fill="#c4bef2" stroke="#fff" stroke-width="1.5" stroke-linejoin="round"/><path d="M1292.20,501.30 A51,51 0 0 1 1241.20,450.30 L1251.00,450.30 A41.2,41.2 0 0 0 1292.20,491.50 Z" fill="#7282e2" stroke="#fff" stroke-width="1.5" stroke-linejoin="round"/><path d="M1241.20,450.30 A51,51 0 0 1 1292.20,399.30 L1292.20,409.10 A41.2,41.2 0 0 0 1251.00,450.30 Z" fill="#4b60dd" stroke="#fff" stroke-width="1.5" stroke-linejoin="round"/><path d="M915.10,583.30 A51,51 0 0 1 965.99,631.01 L956.21,631.64 A41.2,41.2 0 0 0 915.10,593.10 Z" fill="#e8dcf9" stroke="#fff" stroke-width="1.5" stroke-linejoin="round"/><path d="M965.99,631.01 A51,51 0 0 1 915.10,685.30 L915.10,675.50 A41.2,41.2 0 0 0 956.21,631.64 Z" fill="#c4bef2" stroke="#fff" stroke-width="1.5" stroke-linejoin="round"/><path d="M915.10,685.30 A51,51 0 0 1 864.18,637.15 L873.96,636.60 A41.2,41.2 0 0 0 915.10,675.50 Z" fill="#7282e2" stroke="#fff" stroke-width="1.5" stroke-linejoin="round"/><path d="M864.18,637.15 A51,51 0 0 1 915.10,583.30 L915.10,593.10 A41.2,41.2 0 0 0 873.96,636.60 Z" fill="#4b60dd" stroke="#fff" stroke-width="1.5" stroke-linejoin="round"/><path d="M1292.20,583.30 A51,51 0 0 1 1343.09,631.01 L1333.31,631.64 A41.2,41.2 0 0 0 1292.20,593.10 Z" fill="#e8dcf9" stroke="#fff" stroke-width="1.5" stroke-linejoin="round"/><path d="M1343.09,631.01 A51,51 0 0 1 1292.20,685.30 L1292.20,675.50 A41.2,41.2 0 0 0 1333.31,631.64 Z" fill="#c4bef2" stroke="#fff" stroke-width="1.5" stroke-linejoin="round"/><path d="M1292.20,685.30 A51,51 0 0 1 1241.28,637.15 L1251.06,636.60 A41.2,41.2 0 0 0 1292.20,675.50 Z" fill="#7282e2" stroke="#fff" stroke-width="1.5" stroke-linejoin="round"/><path d="M1241.28,637.15 A51,51 0 0 1 1292.20,583.30 L1292.20,593.10 A41.2,41.2 0 0 0 1251.06,636.60 Z" fill="#4b60dd" stroke="#fff" stroke-width="1.5" stroke-linejoin="round"/><path d="M909.45,771.75 A45.7,45.7 0 0 1 950.52,797.42 L943.87,800.66 A38.3,38.3 0 0 0 909.45,779.15 Z" fill="#86bdf6" stroke="#fff" stroke-width="1.5" stroke-linejoin="round"/><path d="M950.52,797.42 A45.7,45.7 0 0 1 913.43,862.98 L912.79,855.60 A38.3,38.3 0 0 0 943.87,800.66 Z" fill="#86bdf6" stroke="#fff" stroke-width="1.5" stroke-linejoin="round"/><path d="M913.43,862.98 A45.7,45.7 0 0 1 870.28,840.99 L876.62,837.18 A38.3,38.3 0 0 0 912.79,855.60 Z" fill="#c9cdf6" stroke="#fff" stroke-width="1.5" stroke-linejoin="round"/><path d="M870.28,840.99 A45.7,45.7 0 0 1 909.45,771.75 L909.45,779.15 A38.3,38.3 0 0 0 876.62,837.18 Z" fill="#c9cdf6" stroke="#fff" stroke-width="1.5" stroke-linejoin="round"/><path d="M909.45,779.85 A37.6,37.6 0 0 1 912.73,854.91 L912.13,848.13 A30.8,30.8 0 0 0 909.45,786.65 Z" fill="#118af2" stroke="#fff" stroke-width="1.5" stroke-linejoin="round"/><path d="M912.73,854.91 A37.6,37.6 0 1 1 909.45,779.85 L909.45,786.65 A30.8,30.8 0 1 0 912.13,848.13 Z" fill="#9aa6f6" stroke="#fff" stroke-width="1.5" stroke-linejoin="round"/><path d="M1286.30,771.70 A45.7,45.7 0 0 1 1327.37,797.37 L1320.72,800.61 A38.3,38.3 0 0 0 1286.30,779.10 Z" fill="#86bdf6" stroke="#fff" stroke-width="1.5" stroke-linejoin="round"/><path d="M1327.37,797.37 A45.7,45.7 0 0 1 1290.28,862.93 L1289.64,855.55 A38.3,38.3 0 0 0 1320.72,800.61 Z" fill="#86bdf6" stroke="#fff" stroke-width="1.5" stroke-linejoin="round"/><path d="M1290.28,862.93 A45.7,45.7 0 0 1 1247.13,840.94 L1253.47,837.13 A38.3,38.3 0 0 0 1289.64,855.55 Z" fill="#c9cdf6" stroke="#fff" stroke-width="1.5" stroke-linejoin="round"/><path d="M1247.13,840.94 A45.7,45.7 0 0 1 1286.30,771.70 L1286.30,779.10 A38.3,38.3 0 0 0 1253.47,837.13 Z" fill="#c9cdf6" stroke="#fff" stroke-width="1.5" stroke-linejoin="round"/><path d="M1286.30,779.80 A37.6,37.6 0 0 1 1289.58,854.86 L1288.98,848.08 A30.8,30.8 0 0 0 1286.30,786.60 Z" fill="#118af2" stroke="#fff" stroke-width="1.5" stroke-linejoin="round"/><path d="M1289.58,854.86 A37.6,37.6 0 1 1 1286.30,779.80 L1286.30,786.60 A30.8,30.8 0 1 0 1288.98,848.08 Z" fill="#9aa6f6" stroke="#fff" stroke-width="1.5" stroke-linejoin="round"/></svg><div class="t" style="left:880.50px;top:361.10px;font-size:15px;color:#0f2f6a;font-weight:bold;font-style:normal;transform:scaleX(1.0571);">New Store This Month</div><div class="t" style="left:1247.70px;top:361.10px;font-size:15px;color:#0f2f6a;font-weight:bold;font-style:normal;transform:scaleX(1.0494);">Signed Store This Month</div><div class="t" style="left:879.90px;top:545.10px;font-size:15px;color:#0f2f6a;font-weight:bold;font-style:normal;transform:scaleX(1.0232);">Signed Store This Year</div><div class="t" style="left:1281.70px;top:545.10px;font-size:15px;color:#0f2f6a;font-weight:bold;font-style:normal;transform:scaleX(1.0462);">Shop Operation</div><div class="t" style="left:865.40px;top:728.30px;font-size:15px;color:#0f2f6a;font-weight:bold;font-style:normal;transform:scaleX(1.0627);">VIP Consumption Amount</div><div class="t" style="left:1308.50px;top:728.30px;font-size:15px;color:#0f2f6a;font-weight:bold;font-style:normal;transform:scaleX(1.0332);">VIP Flow</div><div class="t" style="left:1052.20px;top:402.57px;font-size:13.5px;color:#555a66;font-weight:normal;font-style:normal;transform:scaleX(1.0472);">Region</div><div class="a" style="left:1051.0px;top:426.7px;width:14px;height:13.5px;background:#e8dcf9"></div><div class="a" style="left:1051.0px;top:447.2px;width:14px;height:13.5px;background:#c4bef2"></div><div class="a" style="left:1051.0px;top:467.7px;width:14px;height:13.5px;background:#7282e2"></div><div class="a" style="left:1051.0px;top:488.2px;width:14px;height:13.5px;background:#4b60dd"></div><div class="a" style="left:1051.5px;top:420px;width:90px;height:80.5px;overflow:hidden"><div class="t" style="left:19.40px;top:6.57px;font-size:13.5px;color:#555a66;font-weight:normal;font-style:normal;transform:scaleX(1.0270);">Region 1</div><div class="t" style="left:19.40px;top:27.07px;font-size:13.5px;color:#555a66;font-weight:normal;font-style:normal;transform:scaleX(1.0270);">Region 2</div><div class="t" style="left:19.40px;top:47.57px;font-size:13.5px;color:#555a66;font-weight:normal;font-style:normal;transform:scaleX(1.0270);">Region 3</div><div class="t" style="left:19.40px;top:68.07px;font-size:13.5px;color:#555a66;font-weight:normal;font-style:normal;transform:scaleX(1.0270);">Region 4</div></div><div class="t" style="left:1429.20px;top:402.57px;font-size:13.5px;color:#555a66;font-weight:normal;font-style:normal;transform:scaleX(1.0472);">Region</div><div class="a" style="left:1428.0px;top:426.7px;width:14px;height:13.5px;background:#e8dcf9"></div><div class="a" style="left:1428.0px;top:447.2px;width:14px;height:13.5px;background:#c4bef2"></div><div class="a" style="left:1428.0px;top:467.7px;width:14px;height:13.5px;background:#7282e2"></div><div class="a" style="left:1428.0px;top:488.2px;width:14px;height:13.5px;background:#4b60dd"></div><div class="a" style="left:1428.5px;top:420px;width:90px;height:80.5px;overflow:hidden"><div class="t" style="left:19.40px;top:6.57px;font-size:13.5px;color:#555a66;font-weight:normal;font-style:normal;transform:scaleX(1.0270);">Region 1</div><div class="t" style="left:19.40px;top:27.07px;font-size:13.5px;color:#555a66;font-weight:normal;font-style:normal;transform:scaleX(1.0270);">Region 2</div><div class="t" style="left:19.40px;top:47.57px;font-size:13.5px;color:#555a66;font-weight:normal;font-style:normal;transform:scaleX(1.0270);">Region 3</div><div class="t" style="left:19.40px;top:68.07px;font-size:13.5px;color:#555a66;font-weight:normal;font-style:normal;transform:scaleX(1.0270);">Region 4</div></div><div class="t" style="left:1052.20px;top:586.07px;font-size:13.5px;color:#555a66;font-weight:normal;font-style:normal;transform:scaleX(1.0472);">Region</div><div class="a" style="left:1051.0px;top:610.2px;width:14px;height:13.5px;background:#e8dcf9"></div><div class="a" style="left:1051.0px;top:630.7px;width:14px;height:13.5px;background:#c4bef2"></div><div class="a" style="left:1051.0px;top:651.2px;width:14px;height:13.5px;background:#7282e2"></div><div class="a" style="left:1051.0px;top:671.7px;width:14px;height:13.5px;background:#4b60dd"></div><div class="a" style="left:1051.5px;top:603.5px;width:90px;height:80.5px;overflow:hidden"><div class="t" style="left:19.40px;top:6.57px;font-size:13.5px;color:#555a66;font-weight:normal;font-style:normal;transform:scaleX(1.0270);">Region 1</div><div class="t" style="left:19.40px;top:27.07px;font-size:13.5px;color:#555a66;font-weight:normal;font-style:normal;transform:scaleX(1.0270);">Region 2</div><div class="t" style="left:19.40px;top:47.57px;font-size:13.5px;color:#555a66;font-weight:normal;font-style:normal;transform:scaleX(1.0270);">Region 3</div><div class="t" style="left:19.40px;top:68.07px;font-size:13.5px;color:#555a66;font-weight:normal;font-style:normal;transform:scaleX(1.0270);">Region 4</div></div><div class="t" style="left:1429.20px;top:586.07px;font-size:13.5px;color:#555a66;font-weight:normal;font-style:normal;transform:scaleX(1.0472);">Region</div><div class="a" style="left:1428.0px;top:610.2px;width:14px;height:13.5px;background:#e8dcf9"></div><div class="a" style="left:1428.0px;top:630.7px;width:14px;height:13.5px;background:#c4bef2"></div><div class="a" style="left:1428.0px;top:651.2px;width:14px;height:13.5px;background:#7282e2"></div><div class="a" style="left:1428.0px;top:671.7px;width:14px;height:13.5px;background:#4b60dd"></div><div class="a" style="left:1428.5px;top:603.5px;width:90px;height:80.5px;overflow:hidden"><div class="t" style="left:19.40px;top:6.57px;font-size:13.5px;color:#555a66;font-weight:normal;font-style:normal;transform:scaleX(1.0270);">Region 1</div><div class="t" style="left:19.40px;top:27.07px;font-size:13.5px;color:#555a66;font-weight:normal;font-style:normal;transform:scaleX(1.0270);">Region 2</div><div class="t" style="left:19.40px;top:47.57px;font-size:13.5px;color:#555a66;font-weight:normal;font-style:normal;transform:scaleX(1.0270);">Region 3</div><div class="t" style="left:19.40px;top:68.07px;font-size:13.5px;color:#555a66;font-weight:normal;font-style:normal;transform:scaleX(1.0270);">Region 4</div></div><div class="t" style="left:1039.60px;top:769.47px;font-size:13.5px;color:#555a66;font-weight:normal;font-style:normal;transform:scaleX(1.0624);">Main Categ...</div><div class="a" style="left:1039px;top:793.4px;width:13.7px;height:13.5px;background:#0a84f0;border-radius:1px"></div><div class="a" style="left:1039px;top:814.2px;width:13.7px;height:13.5px;background:#92a3f5;border-radius:1px"></div><div class="t" style="left:1057.60px;top:793.47px;font-size:13.5px;color:#555a66;font-weight:normal;font-style:normal;transform:scaleX(1.0358);">Consump...</div><div class="t" style="left:1057.60px;top:814.07px;font-size:13.5px;color:#555a66;font-weight:normal;font-style:normal;transform:scaleX(1.0358);">Consump...</div><div class="t" style="left:1416.60px;top:769.47px;font-size:13.5px;color:#555a66;font-weight:normal;font-style:normal;transform:scaleX(1.0624);">Main Categ...</div><div class="a" style="left:1416px;top:793.4px;width:13.7px;height:13.5px;background:#0a84f0;border-radius:1px"></div><div class="a" style="left:1416px;top:814.2px;width:13.7px;height:13.5px;background:#92a3f5;border-radius:1px"></div><div class="t" style="left:1434.60px;top:793.47px;font-size:13.5px;color:#555a66;font-weight:normal;font-style:normal;transform:scaleX(1.0203);">Flow in L...</div><div class="t" style="left:1434.60px;top:814.07px;font-size:13.5px;color:#555a66;font-weight:normal;font-style:normal;transform:scaleX(1.0362);">Flow in T...</div></body></html>
